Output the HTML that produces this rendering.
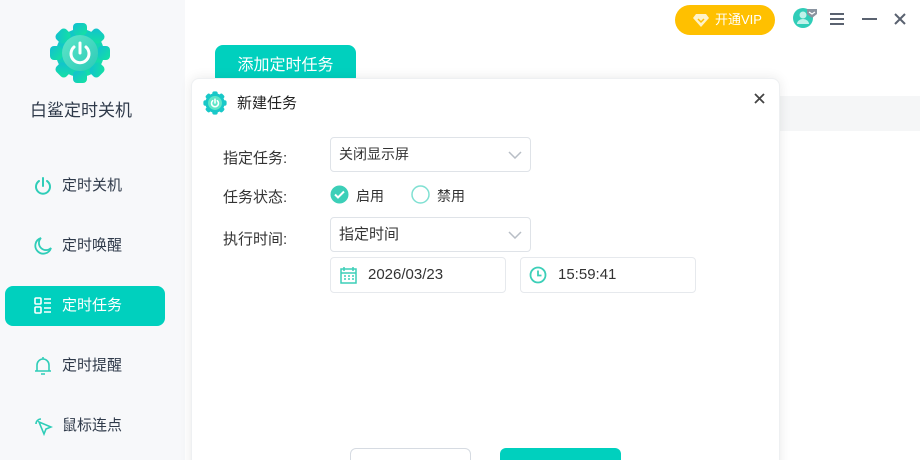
<!DOCTYPE html><html><head><meta charset="utf-8"><style>
*{margin:0;padding:0;box-sizing:border-box}
html{width:920px;height:460px;overflow:hidden}
body{width:920px;height:460px;overflow:hidden;background:#fff;font-family:"Liberation Sans","Noto Sans CJK SC",sans-serif;position:relative;color:#333}
.side{position:absolute;left:0;top:0;width:185px;height:460px;background:#f7f8fa}
.abs{position:absolute}
.nav{position:absolute;left:5px;width:160px;height:40px;border-radius:8px;font-size:15px;color:#2f3a4a;line-height:40px;padding-left:57px}
.nav svg{position:absolute;left:28px;top:10px}
.act{background:#00d0be;color:#fff}
.strip{position:absolute;left:760px;top:96px;width:160px;height:35px;background:#f5f6f7}
.dlg{position:absolute;left:191px;top:78px;width:589px;height:400px;background:#fff;border-radius:8px;box-shadow:0 0 12px rgba(0,0,0,.09);border:1px solid #eef0f2}
.lab{position:absolute;font-size:15px;color:#333}
.box{position:absolute;border:1px solid #dfe3e8;border-radius:4px;background:#fff;font-size:14px;color:#333}
</style></head><body>
<div class="side">
<svg class="abs" style="left:49px;top:22px" width="62" height="62" viewBox="0 0 62 62"><defs><linearGradient id="g" x1="0" y1="0" x2="1" y2="1"><stop offset="0" stop-color="#12bfd2"/><stop offset="1" stop-color="#14e3a0"/></linearGradient><linearGradient id="g2" x1="0" y1="0" x2="1" y2="1"><stop offset="0" stop-color="#5fe6c8"/><stop offset="1" stop-color="#2ccab8"/></linearGradient></defs>
<g fill="url(#g)"><circle cx="31" cy="31" r="24"/><rect x="24" y="1" width="14" height="12" rx="4"/><rect x="24" y="49" width="14" height="12" rx="4"/><rect x="1" y="24" width="12" height="14" rx="4"/><rect x="49" y="24" width="12" height="14" rx="4"/><rect x="24" y="1" width="14" height="12" rx="4" transform="rotate(45 31 31)"/><rect x="24" y="1" width="14" height="12" rx="4" transform="rotate(-45 31 31)"/><rect x="24" y="49" width="14" height="12" rx="4" transform="rotate(45 31 31)"/><rect x="24" y="49" width="14" height="12" rx="4" transform="rotate(-45 31 31)"/></g>
<circle cx="31" cy="31" r="18" fill="url(#g2)"/><path d="M25 25a9 9 0 1 0 12 0" fill="none" stroke="#fff" stroke-width="3" stroke-linecap="round"/><path d="M31 21v10" stroke="#fff" stroke-width="3" stroke-linecap="round"/></svg>
<div class="abs" style="left:30px;top:96px;font-size:17px;color:#2f3a4a">白鲨定时关机</div>
<div class="nav" style="top:166px"><svg width="20" height="20" viewBox="0 0 20 20" fill="none" stroke="#2fcdb8" stroke-width="2" stroke-linecap="round"><path d="M6 5a7 7 0 1 0 8 0"/><path d="M10 2v8"/></svg>定时关机</div>
<div class="nav" style="top:226px"><svg width="20" height="20" viewBox="0 0 20 20" fill="none" stroke="#2fcdb8" stroke-width="1.8"><path d="M8 2a8 8 0 1 0 10 10A7 7 0 0 1 8 2z"/></svg>定时唤醒</div>
<div class="nav act" style="top:286px"><svg width="20" height="20" viewBox="0 0 20 20" fill="none" stroke="#fff" stroke-width="1.6"><rect x="2" y="2" width="6" height="6" rx="1"/><rect x="2" y="11" width="6" height="6" rx="1"/><path d="M11 3h7M11 7h7M11 12h7M11 16h7"/></svg>定时任务</div>
<div class="nav" style="top:346px"><svg width="20" height="20" viewBox="0 0 20 20" fill="none" stroke="#2fcdb8" stroke-width="1.6"><path d="M4 15V9a6 6 0 0 1 12 0v6zM2 15h16M8 18h4M10 1v2"/></svg>定时提醒</div>
<div class="nav" style="top:406px"><svg width="20" height="20" viewBox="0 0 20 20" fill="none" stroke="#2fcdb8" stroke-width="1.6"><path d="M6 6l12 5-5 2-2 5z"/><path d="M3 8a5 5 0 0 1 5-5"/></svg>鼠标连点</div>
</div>
<div class="strip"></div>
<div class="abs" style="left:675px;top:5px;width:100px;height:30px;border-radius:15px;background:#ffc000;color:#fff;font-size:13px;line-height:30px;padding-left:40px">开通VIP<svg class="abs" style="left:18px;top:8px" width="16" height="14" viewBox="0 0 16 14"><path d="M3 1h10l3 4-8 9-8-9z" fill="#fff3c8"/><path d="M5 6l3 3 3-3" stroke="#ffc000" stroke-width="1.5" fill="none"/></svg></div>
<svg class="abs" style="left:793px;top:7px" width="26" height="22" viewBox="0 0 26 22"><circle cx="10" cy="11" r="10" fill="#2fcdb8"/><circle cx="10" cy="8" r="3.5" fill="#bff2ea"/><path d="M4 17a6 5 0 0 1 12 0z" fill="#bff2ea"/><path d="M14 2h10v5l-5 4-5-4z" fill="#8a94a0"/><path d="M16 5l3 2 3-2" stroke="#fff" stroke-width="1.2" fill="none"/></svg>
<svg class="abs" style="left:829px;top:12px" width="16" height="14" stroke="#5a6270" stroke-width="2"><path d="M1 2h14M1 7h14M1 12h14"/></svg>
<svg class="abs" style="left:862px;top:18px" width="15" height="3" stroke="#5a6270" stroke-width="2"><path d="M0 1h15"/></svg>
<svg class="abs" style="left:894px;top:13px" width="12" height="12" stroke="#5a6270" stroke-width="2"><path d="M1 1l10 10M11 1L1 11"/></svg>
<div class="abs" style="left:215px;top:45px;width:141px;height:40px;border-radius:8px;background:#00d0be;color:#fff;font-size:16px;text-align:center;line-height:42px">添加定时任务</div>
<div class="dlg">
<svg class="abs" style="left:11px;top:12px" width="24" height="24" viewBox="0 0 62 62"><g fill="#19c8c8"><circle cx="31" cy="31" r="25"/><rect x="24" y="1" width="14" height="60" rx="5"/><rect x="1" y="24" width="60" height="14" rx="5"/><rect x="24" y="1" width="14" height="60" rx="5" transform="rotate(45 31 31)"/><rect x="24" y="1" width="14" height="60" rx="5" transform="rotate(-45 31 31)"/></g><circle cx="31" cy="31" r="18" fill="#5fe6c8"/><path d="M25 25a9 9 0 1 0 12 0M31 21v10" fill="none" stroke="#fff" stroke-width="4" stroke-linecap="round"/></svg>
<div class="abs" style="left:45px;top:13px;font-size:15px;color:#222">新建任务</div>
<svg class="abs" style="left:562px;top:14px" width="11" height="11" stroke="#444" stroke-width="1.8"><path d="M1 1l9 9M10 1L1 10"/></svg>
</div>
<div class="lab" style="left:223px;top:147px">指定任务:</div>
<div class="box" style="left:330px;top:137px;width:201px;height:35px;line-height:33px;padding-left:8px">关闭显示屏<svg class="abs" style="left:177px;top:13px" width="14" height="8" stroke="#b8bec6" stroke-width="1.5" fill="none"><path d="M1 1l6 6 6-6"/></svg></div>
<div class="lab" style="left:223px;top:186px">任务状态:</div>
<svg class="abs" style="left:330px;top:185px" width="19" height="19"><circle cx="9.5" cy="9.5" r="9" fill="#3ccfb8"/><path d="M5 9.5l3 3 6-6" stroke="#fff" stroke-width="2" fill="none"/></svg>
<div class="abs" style="left:356px;top:186px;font-size:14px">启用</div>
<svg class="abs" style="left:411px;top:185px" width="19" height="19"><circle cx="9.5" cy="9.5" r="8.5" fill="none" stroke="#7fe0d2" stroke-width="1.5"/></svg>
<div class="abs" style="left:437px;top:186px;font-size:14px">禁用</div>
<div class="lab" style="left:223px;top:228px">执行时间:</div>
<div class="box" style="left:330px;top:217px;width:201px;height:35px;line-height:33px;padding-left:8px;font-size:15px">指定时间<svg class="abs" style="left:177px;top:13px" width="14" height="8" stroke="#b8bec6" stroke-width="1.5" fill="none"><path d="M1 1l6 6 6-6"/></svg></div>
<div class="box" style="left:330px;top:257px;width:176px;height:36px;line-height:34px;padding-left:37px;font-size:15px;border-color:#e6e9ed">2026/03/23<svg class="abs" style="left:9px;top:8px" width="17" height="18" viewBox="0 0 17 18" fill="none" stroke="#3ccfb8" stroke-width="1.5"><rect x="1" y="3" width="15" height="14"/><path d="M4 1v4M13 1v4M1 7h15M4 10h2M8 10h2M12 10h2M4 13h2M8 13h2M12 13h2"/></svg></div>
<div class="box" style="left:520px;top:257px;width:176px;height:36px;line-height:34px;padding-left:37px;font-size:15px;border-color:#e6e9ed">15:59:41<svg class="abs" style="left:8px;top:8px" width="18" height="18" viewBox="0 0 18 18" fill="none" stroke="#3ccfb8" stroke-width="1.8"><circle cx="9" cy="9" r="7.5"/><path d="M9 4.5v5h3.5"/></svg></div>
<div class="abs" style="left:350px;top:448px;width:121px;height:30px;border:1px solid #d6dbe2;border-radius:6px;background:#fff"></div>
<div class="abs" style="left:500px;top:448px;width:121px;height:30px;border-radius:6px;background:#00d0be"></div>
</body></html>
